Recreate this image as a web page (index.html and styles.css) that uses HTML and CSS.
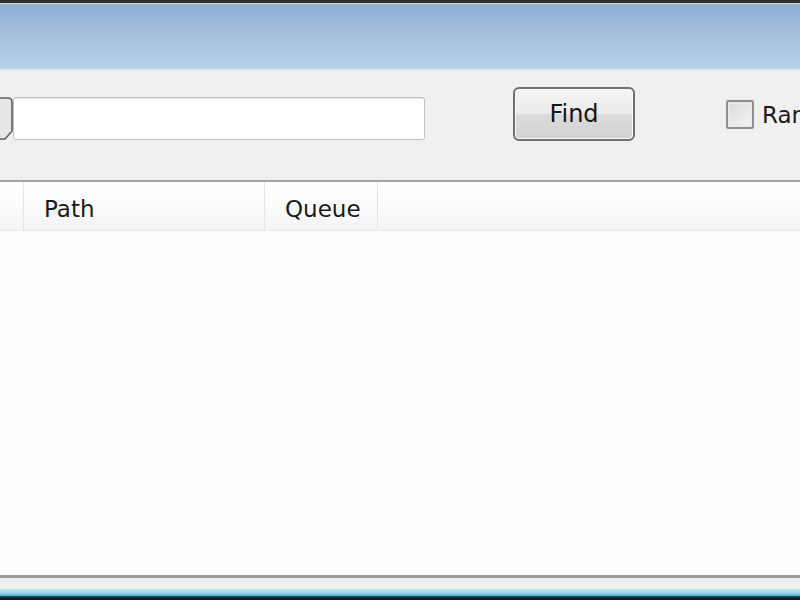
FILE: index.html
```html
<!DOCTYPE html>
<html lang="en">
<head>
<meta charset="UTF-8">
<meta name="viewport" content="width=device-width, initial-scale=1.0">
<title>Find</title>
<link rel="stylesheet" href="styles.css">
</head>
<body>
<div class="window">
    <div class="titlebar"></div>

    <div class="toolbar">
        <div class="search">
            <svg class="thumb" width="14" height="44" viewBox="0 0 14 44">
                <path d="M-4 1 H8 Q12 1 12 5 V34 L5 42 H-4 Z" fill="#e6e6e6" stroke="#5f5f5f" stroke-width="1.6"/>
            </svg>
            <input class="search-box" type="text">
        </div>
        <button class="find-btn">Find</button>
        <label class="option">
            <span class="check"></span>
            <span class="option-text">Random</span>
        </label>
    </div>

    <div class="list-header">
        <div class="col col-icon"></div>
        <div class="col col-path">Path</div>
        <div class="col col-queue">Queue</div>
        <div class="col col-rest"></div>
    </div>

    <div class="list"></div>

    <div class="statusbar"></div>
    <div class="taskbar"></div>
</div>
</body>
</html>
```

FILE: styles.css
```css
body, html {
    margin: 0;
    padding: 0;
    height: 100%;
    overflow: hidden;
}

body {
    font-family: "DejaVu Sans", Verdana, sans-serif;
    font-size: 23px;
    color: #1a1a1a;
    background: #ffffff;
}

.window {
    display: flex;
    flex-direction: column;
    height: 100%;
}

.titlebar {
    height: 66px;
    border-top: 3px solid #2e3033;
    box-shadow: inset 0 1px 0 #c9d3dc, inset 0 2px 0 #aab9c9;
    background: linear-gradient(#8cadd6, #a3bfdb 45%, #b8d2ea);
    border-bottom: 2px solid #dde7f1;
    flex-shrink: 0;
}

.toolbar {
    display: flex;
    align-items: flex-start;
    height: 111px;
    padding-top: 16px;
    box-sizing: border-box;
    background: #f0f0ef;
    border-bottom: 2px solid #a3a3a3;
    white-space: nowrap;
    flex-shrink: 0;
}

.toolbar > * {
    flex-shrink: 0;
}

.search {
    display: flex;
    margin-top: 10px;
    width: 425px;
    height: 43px;
}

.thumb {
    flex-shrink: 0;
}

.search-box {
    flex: 1;
    min-width: 0;
    margin: 0 0 0 -1px;
    padding: 0;
    height: 41px;
    border: 1px solid #c2c2c2;
    border-radius: 3px;
    background: #ffffff;
    box-shadow: inset 0 1px 0 #e4e4e4;
}

.find-btn {
    margin-left: 88px;
    width: 122px;
    height: 54px;
    padding: 0;
    border: 2px solid #707070;
    border-radius: 6px;
    background: linear-gradient(#f4f4f4, #ebebeb 50%, #dcdcdc 51%, #d2d2d2);
    box-shadow: inset 0 0 0 1px #fafafa;
    font-family: inherit;
    font-size: 24px;
    color: #141414;
}

.option {
    display: flex;
    align-items: center;
    margin-left: 91px;
    margin-top: 13px;
}

.check {
    width: 24px;
    height: 25px;
    border: 2px solid #8e8f8f;
    border-radius: 2px;
    background: linear-gradient(135deg, #d8d8d8, #f6f6f6);
    box-shadow: inset 0 0 0 2px #e9e9e9;
}

.option-text {
    margin-left: 8px;
}

.list-header {
    display: flex;
    height: 48px;
    background: linear-gradient(#ffffff, #fbfbfc 50%, #f2f3f5);
    border-bottom: 1px solid #e3e5e8;
    flex-shrink: 0;
}

.col {
    display: flex;
    align-items: center;
    padding-top: 6px;
    box-sizing: border-box;
    border-right: 1px solid #e2e4e7;
}

.col-icon {
    width: 24px;
}

.col-path {
    width: 241px;
    padding-left: 20px;
}

.col-queue {
    width: 113px;
    padding-left: 20px;
}

.col-rest {
    flex: 1;
    border-right: none;
}

.list {
    flex: 1;
    background: #fefefe;
}

.statusbar {
    height: 11px;
    border-top: 3px solid #9c9c9c;
    background: #eef0f0;
    flex-shrink: 0;
}

.taskbar {
    height: 11px;
    background: linear-gradient(#c6e9f2, #8fd2e6 40%, #4fa9c4 62%, #123038 70%, #0c1a20);
    flex-shrink: 0;
}
```
